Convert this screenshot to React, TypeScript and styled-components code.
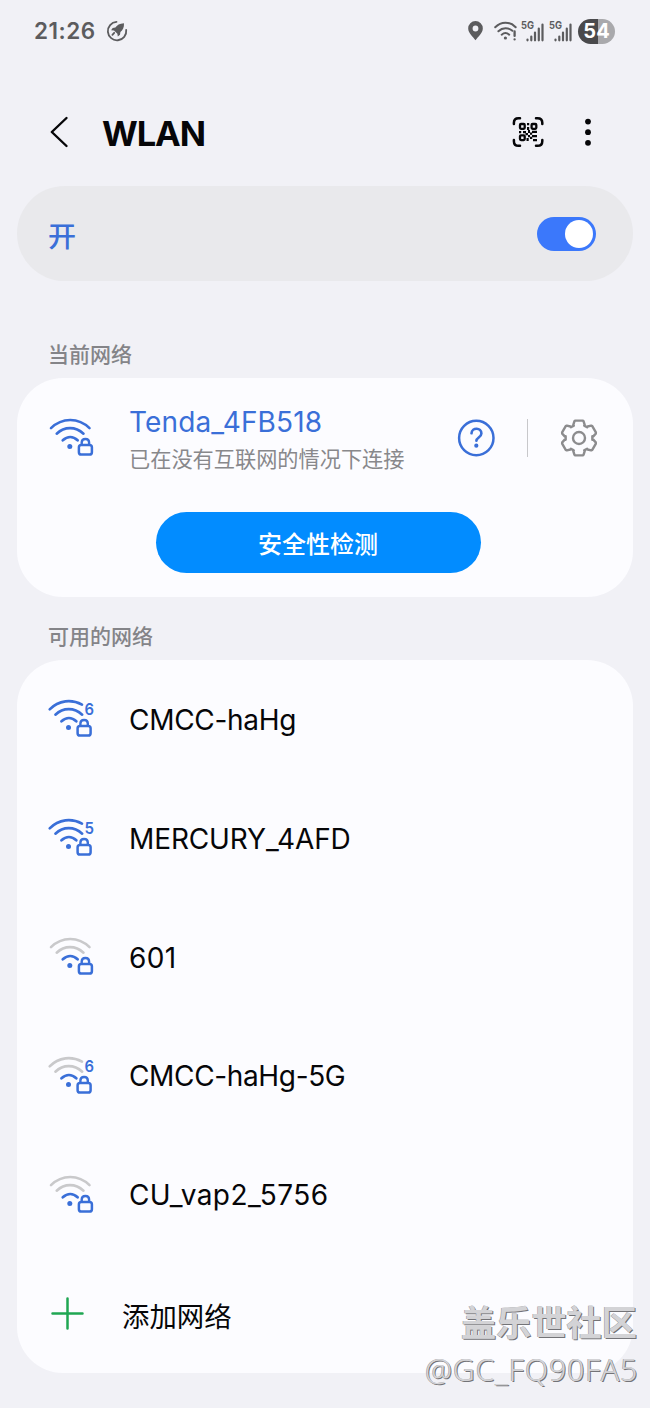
import React from "react";
import styled, { createGlobalStyle } from "styled-components";

const BLUE = "#3a6fd8";
const GREY = "#c9c9cb";
const INK = "#5c5c5e";

const GlobalStyle = createGlobalStyle`
  * { box-sizing: border-box; }
  body {
    margin: 0;
    background: #f1f1f6;
    font-family: Inter, "Noto Sans CJK SC", sans-serif;
    color: #060608;
  }
`;

const Screen = styled.main`
  position: relative;
  width: 650px;
  height: 1408px;
  overflow: hidden;
  background: #f1f1f6;
  padding: 0 17px;
  white-space: nowrap;
`;

const StatusBar = styled.header`
  height: 62px;
  padding: 0 18px 0 17px;
  display: flex;
  align-items: center;
  justify-content: space-between;
`;

const StatusGroup = styled.div<{ $gap: number }>`
  display: flex;
  align-items: center;
  gap: ${(p) => p.$gap}px;
`;

const Clock = styled.span`
  font-size: 22.5px;
  font-weight: 600;
  line-height: 28px;
  letter-spacing: 0.5px;
  color: ${INK};
`;

const Battery = styled.span`
  width: 37px;
  height: 25px;
  margin-left: 1px;
  border-radius: 13px;
  background: linear-gradient(90deg, #4a4a4c 54%, #a9a9ac 54%);
  color: #fff;
  font-size: 20px;
  font-weight: 700;
  line-height: 25px;
  text-align: center;
`;

const AppBar = styled.div`
  height: 124px;
  padding: 16px 41px 0 29px;
  display: flex;
  align-items: center;
`;

const Title = styled.h1`
  margin: 3px auto 0 29px;
  font-size: 34.5px;
  font-weight: 700;
  line-height: 42px;
  letter-spacing: -1.1px;
`;

const MoreButton = styled.span`
  display: flex;
  margin-left: 40px;
`;

const SwitchBar = styled.section`
  height: 95px;
  padding: 0 37px 0 31px;
  border-radius: 48px;
  background: #e9e9ec;
  display: flex;
  align-items: center;
  justify-content: space-between;
`;

const SwitchLabel = styled.span`
  font-size: 28px;
  font-weight: 500;
  line-height: 40px;
  padding-top: 6px;
  color: ${BLUE};
`;

const Toggle = styled.span`
  width: 59px;
  height: 34px;
  padding: 3px;
  border-radius: 17px;
  background: #3b78fb;
  display: flex;
  justify-content: flex-end;
`;

const Knob = styled.span`
  width: 28px;
  height: 28px;
  border-radius: 50%;
  background: #fff;
`;

const SectionTitle = styled.h2<{ $height: number; $bottom: number }>`
  height: ${(p) => p.$height}px;
  margin: 0;
  padding: 0 0 ${(p) => p.$bottom}px 31px;
  display: flex;
  align-items: flex-end;
  font-size: 21px;
  font-weight: 500;
  line-height: 30px;
  color: #848488;
`;

const Card = styled.section`
  border-radius: 46px;
  background: #fcfcff;
`;

const CurrentCard = styled(Card)`
  height: 219px;
  display: flex;
  flex-direction: column;
  align-items: center;
`;

const CurrentRow = styled.div`
  width: 100%;
  height: 119px;
  padding: 0 35px 0 29px;
  display: flex;
  align-items: center;
`;

const CurrentText = styled.div`
  margin: 3px auto 0 33px;
  display: flex;
  flex-direction: column;
`;

const NetworkName = styled.span<{ $color?: string; $spacing?: number }>`
  font-size: 28px;
  line-height: 36px;
  padding-top: 1px;
  letter-spacing: ${(p) => p.$spacing ?? 0}px;
  color: ${(p) => p.$color ?? "inherit"};
`;

const NetworkStatus = styled.span`
  font-size: 21.2px;
  line-height: 32px;
  margin-top: 3px;
  color: #88888b;
`;

const Divider = styled.span`
  width: 1px;
  height: 38px;
  margin: 0 32px;
  background: #c8c8cb;
`;

const CheckButton = styled.button`
  width: 325px;
  height: 61px;
  margin: 15px 14px 0 0;
  padding: 4px 0 0;
  border: 0;
  border-radius: 31px;
  background: #028cff;
  color: #fff;
  font: 500 24px/34px Inter, "Noto Sans CJK SC", sans-serif;
`;

const NetworkList = styled(Card)`
  height: 713px;
  display: grid;
  grid-template-rows: repeat(6, 1fr);
`;

const NetworkRow = styled.div<{ $gap?: number }>`
  padding-left: 29px;
  display: flex;
  align-items: center;
  gap: ${(p) => p.$gap ?? 33}px;
`;

const AddLabel = styled.span`
  font-size: 27.4px;
  line-height: 40px;
  padding-top: 6px;
`;

const Watermark = styled.div`
  position: absolute;
  right: 13px;
  bottom: 18px;
  display: flex;
  flex-direction: column;
  align-items: flex-end;
  color: #d3d3d6;
  text-shadow: -0.5px -0.5px 0 #98989c, 1px 1px 0 #737377;
`;

const WatermarkSite = styled.span`
  font-size: 35.2px;
  font-weight: 600;
  line-height: 50px;
`;

const WatermarkUser = styled.span`
  font-family: "Noto Sans", sans-serif;
  font-size: 30.5px;
  font-weight: 300;
  line-height: 42px;
  letter-spacing: 0.7px;
  margin-right: -1px;
`;

function WifiIcon({ weak, band }: { weak?: boolean; band?: string }) {
  const outer = weak ? GREY : BLUE;
  return (
    <svg width="50" height="42" viewBox="0 0 50 42" fill="none" strokeLinecap="round" strokeWidth="2.600">
      <g transform={band ? "translate(-1.3 0)" : undefined}>
        <path d={band ? "M5 11.4C14 2 27 1 37.3 6.6" : "M5 11.2C16 .3 32.500 .3 43.500 11.200"} stroke={outer} />
        <path d="M10.700 16.700C18.500 9.200 29.500 9.200 37.500 16.700" stroke={outer} />
        <path d="M16.800 23.200C21.500 19 27 19 31.600 23.200" stroke={BLUE} strokeWidth="2.800" />
        <circle cx="23.800" cy="29.500" r="2.500" fill={BLUE} />
        <rect x="32.900" y="27.900" width="13" height="9.700" rx="2.400" stroke={BLUE} strokeWidth="2.500" />
        <path d="M35.700 27.400v-1.800c0-4.800 7.400-4.800 7.400 0v1.800" stroke={BLUE} strokeWidth="2.400" />
      </g>
      {band && (
        <text x="38.500" y="16.800" fill={BLUE} fontFamily="Inter, sans-serif" fontSize="16.500" fontWeight="600" textLength="9.500" lengthAdjust="spacingAndGlyphs">
          {band}
        </text>
      )}
    </svg>
  );
}

function RocketIcon() {
  return (
    <svg width="22" height="22" viewBox="0 0 22 22" fill="none">
      <path d="M10.500 1.900A9.200 9.200 0 1 0 20.200 10" stroke={INK} strokeWidth="1.800" strokeLinecap="round" />
      <path d="M18 3.200c-4.500.1-7 2-8.600 4.300l-2.700.6-1.600 2.200 2.900.2 3.400 3.300.4 2.700 2.200-1.800.4-2.700c2.400-2.100 3.800-4.500 3.600-8.800z" fill={INK} />
      <path d="M8.200 12.800l-1.800 2" stroke={INK} strokeWidth="1.800" strokeLinecap="round" />
    </svg>
  );
}

const PinIcon = () => (
  <svg width="15" height="20" viewBox="0 0 15 20">
    <path d="M7.500 0A7.300 7.300 0 0 0 .2 7.400C.2 12.200 5 15.500 7.500 19.300 10 15.500 14.800 12.200 14.800 7.400A7.300 7.300 0 0 0 7.500 0zm0 10.400a2.900 2.900 0 1 1 0-5.800 2.900 2.900 0 0 1 0 5.800z" fill={INK} fillRule="evenodd" />
  </svg>
);

const StatusWifiSvg = styled.svg`
  margin-left: 7px;
`;

function StatusWifiIcon() {
  return (
    <StatusWifiSvg width="23" height="20" viewBox="0 0 23 20" fill="none" stroke={INK} strokeWidth="2" strokeLinecap="round">
      <path d="M1.200 6.200C7 .1 16 .1 21.700 6.200M4.400 10.200c4.200-4 9.800-4 14-.4M7.700 13.700c2.300-2 5.200-2 7.500 0" />
      <circle cx="11.400" cy="17" r="1.600" fill={INK} stroke="none" />
      <path d="M20.600 10.500v4.400M20.600 18.300v.1" strokeWidth="2.300" />
    </StatusWifiSvg>
  );
}

function SignalIcon() {
  return (
    <svg width="24" height="22" viewBox="0 0 24 22">
      <text x="0" y="9" fill={INK} fontFamily="Inter, sans-serif" fontSize="10.500" fontWeight="700" textLength="13" lengthAdjust="spacingAndGlyphs">
        5G
      </text>
      <path d="M6.500 19.500v.8M10.300 16.500v3.800M14 12.500v7.800M17.800 8.500v11.800M21.500 4.500v15.800" stroke={INK} strokeWidth="2.200" strokeLinecap="round" />
    </svg>
  );
}

function BackIcon() {
  return (
    <svg width="27" height="34" viewBox="0 0 27 34" fill="none">
      <path d="M20.500 3L5.800 17l14.700 14" stroke="#060608" strokeWidth="2.400" strokeLinecap="round" strokeLinejoin="round" />
    </svg>
  );
}

function ScanIcon() {
  return (
    <svg width="32" height="32" viewBox="0 0 32 32" fill="none" stroke="#060608" strokeWidth="2.500" strokeLinecap="round">
      <path d="M1.900 8V6.800Q1.900 2.200 6.500 2.200H8M24 2.200h1.500q4.800 0 4.800 4.600V8M1.900 24v1.200q0 4.600 4.600 4.600H8M24 29.800h1.500q4.800 0 4.800-4.600V24" />
      <g strokeWidth="2.300">
        <rect x="8" y="8" width="4.700" height="4.800" rx="1" />
        <rect x="19.600" y="8" width="4.700" height="4.800" rx="1" />
        <rect x="8" y="19.300" width="4.700" height="4.800" rx="1" />
      </g>
      <g fill="#060608" stroke="none">
        <path d="M15 7h2.200v2.200H15zM15 11h2.200v3H15zM7 15h2.200v2.200H7zM11 15h3v2.200h-3zM13.500 17H16v2.200h-2.500zM16 14h2v3h-2zM18 16.500h2.200v2.200H18zM20 14.800h5V17h-5zM16 19h2v2.200h-2zM20 19h5v2.200h-5zM14.500 22h2.200v3h-2.200zM18 20.800h2.200V23H18zM21 23h4v2.200h-4z" />
      </g>
    </svg>
  );
}

function MoreIcon() {
  return (
    <svg width="8" height="30" viewBox="0 0 8 30" fill="#060608">
      <circle cx="4" cy="4.600" r="2.900" />
      <circle cx="4" cy="15.200" r="2.900" />
      <circle cx="4" cy="25.800" r="2.900" />
    </svg>
  );
}

function HelpIcon() {
  return (
    <svg width="38" height="38" viewBox="0 0 38 38" fill="none" stroke={BLUE} strokeLinecap="round">
      <circle cx="19.300" cy="19" r="17.200" strokeWidth="2.500" />
      <path d="M14.500 14.300c.5-6.200 10-5.900 9.900.2 0 3.800-5 4-5 7.200" strokeWidth="2.600" />
      <circle cx="19.300" cy="26.700" r="2.100" fill={BLUE} stroke="none" />
    </svg>
  );
}

const gearTooth = [
  [-5.2, -12.4],
  [-5.7, -13.2],
  [-4.6, -16.7],
  [-3.6, -17.4],
  [3.6, -17.4],
  [4.6, -16.7],
  [5.7, -13.2],
  [5.2, -12.4],
];

const gearOutline = Array.from({ length: 6 }, (_, i) => (i * Math.PI) / 3)
  .flatMap((a) =>
    gearTooth.map(([x, y]) => {
      const px = 19 + x * Math.cos(a) - y * Math.sin(a);
      const py = 19 + x * Math.sin(a) + y * Math.cos(a);
      return `${px.toFixed(2)},${py.toFixed(2)}`;
    })
  )
  .join(" ");

function GearIcon() {
  return (
    <svg width="38" height="38" viewBox="0 0 38 38" fill="none" stroke="#8c8c8e" strokeWidth="2.400" strokeLinejoin="round">
      <polygon points={gearOutline} />
      <circle cx="19" cy="19" r="6" />
    </svg>
  );
}

function PlusIcon() {
  return (
    <svg width="42" height="34" viewBox="0 0 42 34">
      <path d="M21.500 1.500v30M6.500 16.500h30" stroke="#1fa653" strokeWidth="2.500" strokeLinecap="round" />
    </svg>
  );
}

const networks = [
  { name: "CMCC-haHg", band: "6", weak: false, spacing: -0.3 },
  { name: "MERCURY_4AFD", band: "5", weak: false, spacing: -0.12 },
  { name: "601", weak: true, spacing: 0.4 },
  { name: "CMCC-haHg-5G", band: "6", weak: true, spacing: -0.35 },
  { name: "CU_vap2_5756", weak: true, spacing: 0.42 },
];

export default function App() {
  return (
    <>
      <GlobalStyle />
      <Screen>
        <StatusBar>
          <StatusGroup $gap={10}>
            <Clock>21:26</Clock>
            <RocketIcon />
          </StatusGroup>
          <StatusGroup $gap={4}>
            <PinIcon />
            <StatusWifiIcon />
            <SignalIcon />
            <SignalIcon />
            <Battery>54</Battery>
          </StatusGroup>
        </StatusBar>
        <AppBar>
          <BackIcon />
          <Title>WLAN</Title>
          <ScanIcon />
          <MoreButton>
            <MoreIcon />
          </MoreButton>
        </AppBar>
        <SwitchBar>
          <SwitchLabel>开</SwitchLabel>
          <Toggle>
            <Knob />
          </Toggle>
        </SwitchBar>
        <SectionTitle $height={97} $bottom={8}>当前网络</SectionTitle>
        <CurrentCard>
          <CurrentRow>
            <WifiIcon />
            <CurrentText>
              <NetworkName $color={BLUE} $spacing={0.15}>Tenda_4FB518</NetworkName>
              <NetworkStatus>已在没有互联网的情况下连接</NetworkStatus>
            </CurrentText>
            <HelpIcon />
            <Divider />
            <GearIcon />
          </CurrentRow>
          <CheckButton>安全性检测</CheckButton>
        </CurrentCard>
        <SectionTitle $height={63} $bottom={8}>可用的网络</SectionTitle>
        <NetworkList>
          {networks.map((n) => (
            <NetworkRow key={n.name}>
              <WifiIcon weak={n.weak} band={n.band} />
              <NetworkName $spacing={n.spacing}>{n.name}</NetworkName>
            </NetworkRow>
          ))}
          <NetworkRow $gap={34}>
            <PlusIcon />
            <AddLabel>添加网络</AddLabel>
          </NetworkRow>
        </NetworkList>
        <Watermark>
          <WatermarkSite>盖乐世社区</WatermarkSite>
          <WatermarkUser>@GC_FQ90FA5</WatermarkUser>
        </Watermark>
      </Screen>
    </>
  );
}
